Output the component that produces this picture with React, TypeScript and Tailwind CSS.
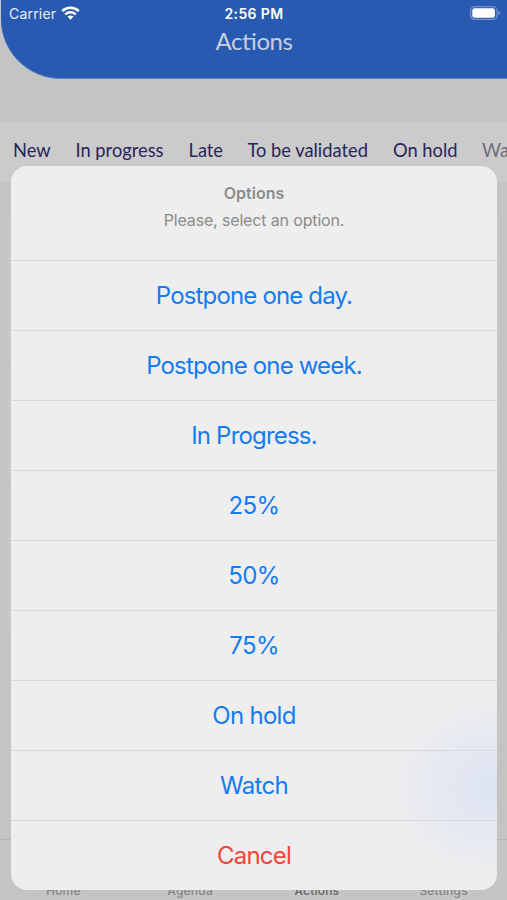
const tabs = [
  { label: "New", width: "w-[62.5px]" },
  { label: "In progress", width: "w-[113px]" },
  { label: "Late", width: "w-[59px]" },
  { label: "To be validated", width: "w-[145.5px]" },
  { label: "On hold", width: "w-[89px]" },
];

const options = [
  { label: "Postpone one day.", tracking: "tracking-[-0.84px]" },
  { label: "Postpone one week.", tracking: "tracking-[-0.84px]" },
  { label: "In Progress.", tracking: "tracking-[-0.8px]" },
  { label: "25%", tracking: "tracking-[-0.6px]" },
  { label: "50%", tracking: "tracking-[-0.6px]" },
  { label: "75%", tracking: "tracking-[-0.6px]" },
  { label: "On hold", tracking: "tracking-[-0.7px]" },
  { label: "Watch", tracking: "tracking-[-0.7px]" },
];

function WifiIcon() {
  return (
    <svg width="19" height="14" viewBox="0 0 19 14" fill="none" stroke="#fff">
      <path d="M1.2 5.1C5.8.6 13.2.6 17.8 5.1" strokeWidth="2.7" />
      <path d="M4.2 8.3c3-2.8 7.6-2.8 10.6 0" strokeWidth="2.4" />
      <path d="M6.5 10.6c1.7-1.5 4.3-1.5 6 0L9.5 13.7Z" fill="#fff" stroke="none" />
    </svg>
  );
}

function BatteryIcon() {
  return (
    <svg width="31" height="14" viewBox="0 0 31 14" fill="none">
      <rect x="0.6" y="0.6" width="26.4" height="12.8" rx="3.8" stroke="#7790cd" strokeWidth="1.2" />
      <rect x="2.3" y="2.2" width="22.6" height="9.6" rx="2.2" fill="#fff" />
      <path d="M28.3 4.8c2.5.8 2.5 3.6 0 4.4Z" fill="#7790cd" />
    </svg>
  );
}

function Header() {
  return (
    <header className="ml-px h-[79px] rounded-bl-[60px] border-b border-[#5e80bd] bg-[#285ab1] text-white">
      <div className="grid h-[26px] grid-cols-3 items-center pl-2 pr-[6px] font-['Inter',sans-serif] text-[14px]">
        <div className="flex items-center gap-[5px] tracking-[0.2px] text-[#e9eefa]">
          <span className="pt-px">Carrier</span>
          <WifiIcon />
        </div>
        <div className="pt-px text-center font-semibold tracking-[0.4px]">
          <span className="-ml-[2px]">2:56 PM</span>
        </div>
        <div className="flex justify-end">
          <BatteryIcon />
        </div>
      </div>
      <h1 className="pt-px text-center font-['Lato',sans-serif] text-[24px] leading-[27px] tracking-[-0.45px] text-[#c9cede] [font-feature-settings:'liga'_1]">
        Actions
      </h1>
    </header>
  );
}

function OptionsSheet() {
  return (
    <section className="absolute left-[11px] top-[166px] h-[724px] w-[486px] overflow-hidden rounded-[16px] bg-[#eeeeee] bg-[radial-gradient(ellipse_110px_90px_at_100%_622px,#dce3f2_0%,#e4e8f1_50%,#eeeeee_100%)] text-center font-['Inter',sans-serif]">
      <div className="h-[94px] pt-[15px] text-[#8b8b8b]">
        <h2 className="text-[16px] font-semibold leading-[24px]">Options</h2>
        <p className="mt-[3px] text-[16px] leading-[24px] tracking-[-0.15px]">Please, select an option.</p>
      </div>
      {options.map((option) => (
        <button
          key={option.label}
          className={`block h-[70px] w-full border-t border-[#d9d9db] pt-px text-[24px] text-[#147cf0] ${option.tracking}`}
        >
          {option.label}
        </button>
      ))}
      <button className="block h-[70px] w-full border-t border-[#d9d9db] pt-px text-[24px] tracking-[-0.8px] text-[#f2453a]">
        Cancel
      </button>
    </section>
  );
}

export default function App() {
  return (
    <div className="relative flex h-[900px] w-[507px] flex-col overflow-hidden bg-[#c4c4c4]">
      <Header />
      <div className="h-[43px]" />
      <nav className="flex h-[60px] shrink-0 whitespace-nowrap bg-[#cbcbcb] pl-[13px] pt-[14px] font-['Lato',sans-serif] text-[18.3px] leading-[28px] text-[#29245a]">
        {tabs.map((tab) => (
          <span key={tab.label} className={`shrink-0 ${tab.width}`}>
            {tab.label}
          </span>
        ))}
        <span className="text-[#6d6c78]">Watch</span>
      </nav>
      <main className="flex flex-1 flex-col gap-[6px] px-[8px] pt-[37px]">
        <div className="h-[142px] rounded-[4px] bg-[#c8c8c8]" />
        <div className="h-[116px] rounded-[4px] bg-[#c8c8c8]" />
        <div className="h-[142px] rounded-[4px] bg-[#c8c8c8]" />
      </main>
      <footer className="grid h-[61px] shrink-0 grid-cols-4 border-t border-[#b3b3b3] bg-[#c5c5c5] pt-[43px] text-center font-['Inter',sans-serif] text-[12px] font-medium leading-[16px] tracking-[0.2px] text-[#858585]">
        <span>Home</span>
        <span>Agenda</span>
        <span className="text-[#666666]">Actions</span>
        <span>Settings</span>
      </footer>
      <OptionsSheet />
    </div>
  );
}
